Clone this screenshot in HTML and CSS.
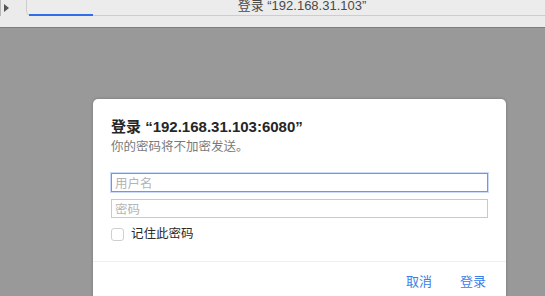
FILE: index.html
```html
<!DOCTYPE html>
<html lang="zh-CN">
<head>
    <meta charset="UTF-8">
    <title>登录</title>
    <link rel="stylesheet" href="styles.css">
</head>
<body>

<div class="toolbar">
    <div class="sidebar-toggle"><span class="arrow"></span></div>
    <div class="address">
        <span class="page-title">登录 “192.168.31.103”</span>
        <div class="progress"></div>
    </div>
</div>

<div class="backdrop">
    <div class="dialog">
        <div class="dialog-body">
            <div class="title">登录 “192.168.31.103:6080”</div>
            <div class="subtitle">你的密码将不加密发送。</div>

            <input type="text" class="field focused" placeholder="用户名">
            <input type="password" class="field" placeholder="密码">

            <label class="remember">
                <span class="check"></span>
                记住此密码
            </label>
        </div>

        <div class="actions">
            <button class="link-btn">取消</button>
            <button class="link-btn">登录</button>
        </div>
    </div>
</div>

</body>
</html>
```

FILE: styles.css
```css
html, body {
    height: 100%;
}
body {
    margin: 0;
    font-family: 'Liberation Sans', 'Noto Sans CJK SC', sans-serif;
    background: #999999;
    overflow: hidden;
}

/* top browser bar */
.toolbar {
    height: 28px;
    background: #ebebeb;
    border-bottom: 1px solid #7e7e7e;
    display: flex;
    box-sizing: border-box;
}
.sidebar-toggle {
    width: 26px;
    height: 16px;
    border-left: 1px solid #b8b8b8;
    display: flex;
    align-items: center;
    padding-left: 3px;
    box-sizing: border-box;
}
.arrow {
    width: 0;
    height: 0;
    border-top: 4px solid transparent;
    border-bottom: 4px solid transparent;
    border-left: 5px solid #555;
}
.address {
    position: relative;
    flex: 1;
    height: 16px;
    border-left: 1px solid #cdcdcd;
    border-bottom: 1px solid #cdcdcd;
    border-bottom-left-radius: 5px;
    background: #ececec;
    text-align: center;
    box-sizing: border-box;
}
.page-title {
    display: block;
    margin-top: -3px;
    font-size: 13px;
    line-height: 18px;
    color: #4a4a4a;
    padding-left: 32px;
}
.progress {
    position: absolute;
    left: 2px;
    bottom: -1px;
    width: 64px;
    height: 2px;
    background: #2f6ee6;
}

/* dialog */
.backdrop {
    padding: 71px 0 0 93px;
}
.dialog {
    width: 413px;
    height: 260px;
    background: #fff;
    border-radius: 5px;
    box-shadow: 0 0 3px rgba(0, 0, 0, 0.25);
}
.dialog-body {
    padding: 18px 18px 0 18px;
    display: flex;
    flex-direction: column;
}
.title {
    font-size: 15px;
    font-weight: bold;
    line-height: 20px;
    color: #262626;
}
.subtitle {
    font-size: 12.5px;
    line-height: 18px;
    color: #7a7a7a;
    margin-top: 1px;
}
.field {
    height: 19px;
    margin: 0;
    padding: 0 3px;
    border: 1px solid #c9c9c9;
    font-family: 'Noto Sans CJK SC', sans-serif;
    font-size: 12.5px;
    color: #333;
    box-sizing: border-box;
    outline: none;
}
.field::placeholder {
    color: #b4b4b4;
}
.field.focused {
    margin-top: 17px;
    border-color: #6c98ec;
    box-shadow: 0 0 0 1px rgba(108, 152, 236, 0.35);
}
.field + .field {
    margin-top: 7px;
}
.remember {
    display: flex;
    align-items: center;
    gap: 7px;
    margin-top: 9px;
    font-size: 12.5px;
    line-height: 14px;
    color: #2a2a2a;
}
.check {
    width: 11px;
    height: 11px;
    border: 1px solid #cfcfcf;
    border-radius: 3px;
    background: #fff;
}

.actions {
    margin-top: 20px;
    border-top: 1px solid #efefef;
    display: flex;
    justify-content: flex-end;
    gap: 26px;
    padding: 10px 20px 0 0;
}
.link-btn {
    border: none;
    background: none;
    padding: 0;
    font-family: 'Noto Sans CJK SC', sans-serif;
    font-size: 13px;
    line-height: 18px;
    color: #3a7ee8;
    cursor: pointer;
}
.link-btn:first-child {
    margin-right: 2px;
}
```
